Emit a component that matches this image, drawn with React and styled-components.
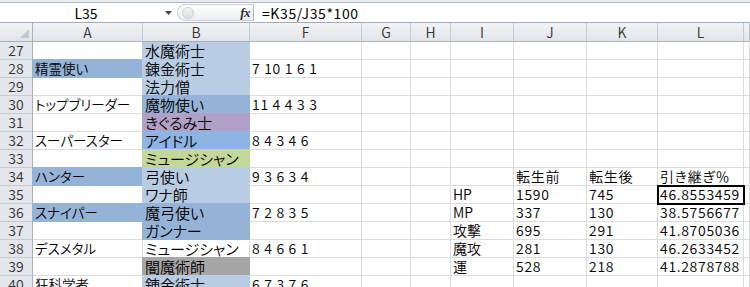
import React from "react";
import styled, { createGlobalStyle } from "styled-components";

const GlobalStyle = createGlobalStyle`
  html, body {
    margin: 0;
    padding: 0;
    background: #ffffff;
    overflow: hidden;
  }
  body {
    font-family: "Noto Sans CJK JP", "Noto Sans", sans-serif;
    color: #000;
  }
`;

const GRID = "33px 110px 107px 112px 49px 40px 63px 73px 71px 86px 1fr";

const Sheet = styled.div`
  width: 750px;
  height: 287px;
  overflow: hidden;
`;

const FormulaBar = styled.div`
  height: 22px;
  box-sizing: border-box;
  padding-top: 2px;
  background: #e9ecf0;
`;

const BarInner = styled.div`
  display: flex;
  align-items: center;
  height: 20px;
  box-sizing: border-box;
  border-top: 1px solid #b4bbc4;
  background: #fff;
`;

const NameBox = styled.div`
  width: 160px;
  box-sizing: border-box;
  padding-left: 12px;
  text-align: center;
  font-size: 14px;
  line-height: 18px;
`;

const ArrowBox = styled.div`
  width: 17px;
  display: flex;
  justify-content: center;
  align-items: center;
`;

const Pill = styled.div`
  width: 77px;
  height: 17px;
  box-sizing: border-box;
  display: flex;
  align-items: center;
  justify-content: space-between;
  padding: 0 3px 0 4px;
  border: 1px solid #c9cdd3;
  border-right: 1px solid #a9b0b9;
  border-radius: 9px 0 0 9px;
  background: linear-gradient(#fdfdfe, #eceff2);
`;

const Knob = styled.div`
  width: 10px;
  height: 10px;
  border-radius: 50%;
  border: 1px solid #cdd1d6;
  background: linear-gradient(#f4f5f7, #dcdfe3);
`;

const Fx = styled.span`
  font-family: "Liberation Serif", "DejaVu Serif", serif;
  font-style: italic;
  font-weight: bold;
  font-size: 13px;
  color: #2b2b2b;
  letter-spacing: -0.5px;
`;

const FormulaText = styled.div`
  padding-left: 8px;
  font-size: 14px;
  line-height: 18px;
  letter-spacing: 0.6px;
`;

const Row = styled.div`
  display: grid;
  grid-template-columns: ${GRID};
  height: 18px;
`;

const HeadRow = styled(Row)`
  border-top: 1px solid #a3abb5;
  height: 20px;
  box-sizing: border-box;
`;

const ColHead = styled.div`
  box-sizing: border-box;
  background: linear-gradient(#f1f3f5, #e1e5ea);
  border-right: 1px solid #c6cbd2;
  border-bottom: 1px solid #a8b0ba;
  text-align: center;
  font-size: 14px;
  line-height: 18px;
  font-weight: 350;
  color: #333;
`;

const Corner = styled(ColHead)`
  display: flex;
  align-items: flex-end;
  justify-content: flex-end;
  padding: 0 3px 3px 0;
  border-right: 1px solid #a8b0ba;
`;

const RowHead = styled.div`
  box-sizing: border-box;
  background: #e3e7ec;
  border-right: 1px solid #a8b0ba;
  border-bottom: 1px solid #c6cbd2;
  text-align: center;
  font-size: 14px;
  line-height: 17px;
  font-weight: 350;
  color: #333;
`;

const Cell = styled.div`
  box-sizing: border-box;
  position: relative;
  background: ${(p) => p.$bg || "transparent"};
  border-right: 1px solid ${(p) => p.$bg || "#dadcdd"};
  border-bottom: 1px solid ${(p) => p.$bg || "#dadcdd"};
  box-shadow: ${(p) =>
    p.$bg
      ? `-1px 0 0 ${p.$bg}${p.$top ? "" : `, 0 -1px 0 ${p.$bg}, -1px -1px 0 ${p.$bg}`}`
      : "none"};
  padding-left: 2px;
  font-size: ${(p) => p.$size || 14}px;
  font-weight: 350;
  line-height: 17px;
  white-space: nowrap;
  font-feature-settings: "palt";
  letter-spacing: ${(p) => (p.$num ? "0.7px" : "0")};
  outline: ${(p) => (p.$active ? "2px solid #000" : "none")};
  outline-offset: -1px;
  z-index: ${(p) => (p.$active ? 2 : "auto")};
`;

const light = "#b8cce4";
const mid = "#95b3d7";
const purple = "#b1a0c7";
const sky = "#8db4e2";
const green = "#c4d79b";
const gray = "#a6a6a6";

const rows = [
  { n: 27, b: "水魔術士", bBg: light },
  { n: 28, a: "精霊使い", aBg: mid, b: "錬金術士", bBg: light, f: "7 10 1 6 1" },
  { n: 29, b: "法力僧", bBg: light },
  { n: 30, a: "トップブリーダー", b: "魔物使い", bBg: mid, f: "11 4 4 3 3" },
  { n: 31, b: "きぐるみ士", bBg: purple },
  { n: 32, a: "スーパースター", b: "アイドル", bBg: sky, f: "8 4 3 4 6" },
  { n: 33, b: "ミュージシャン", bBg: green },
  { n: 34, a: "ハンター", aBg: mid, b: "弓使い", bBg: light, f: "9 3 6 3 4", j: "転生前", k: "転生後", l: "引き継ぎ％" },
  { n: 35, b: "ワナ師", bBg: light, i: "HP", j: "1590", k: "745", l: "46.8553459", active: true },
  { n: 36, a: "スナイパー", aBg: mid, b: "魔弓使い", bBg: mid, f: "7 2 8 3 5", i: "MP", j: "337", k: "130", l: "38.5756677" },
  { n: 37, b: "ガンナー", bBg: mid, i: "攻撃", j: "695", k: "291", l: "41.8705036" },
  { n: 38, a: "デスメタル", b: "ミュージシャン", f: "8 4 6 6 1", i: "魔攻", j: "281", k: "130", l: "46.2633452" },
  { n: 39, b: "闇魔術師", bBg: gray, i: "運", j: "528", k: "218", l: "41.2878788" },
  { n: 40, a: "狂科学者", b: "錬金術士", bBg: light, f: "6 7 3 7 6" },
];

const columns = ["A", "B", "F", "G", "H", "I", "J", "K", "L", ""];

const App = () => {
  return (
    <>
      <GlobalStyle />
      <Sheet>
        <FormulaBar>
          <BarInner>
            <NameBox>L35</NameBox>
            <ArrowBox>
              <svg width="7" height="4" viewBox="0 0 7 4">
                <path d="M0 0 H7 L3.5 4 Z" fill="#444" />
              </svg>
            </ArrowBox>
            <Pill>
              <Knob />
              <Fx>fx</Fx>
            </Pill>
            <FormulaText>=K35/J35*100</FormulaText>
          </BarInner>
        </FormulaBar>

        <HeadRow>
          <Corner>
            <svg width="9" height="9" viewBox="0 0 9 9">
              <path d="M9 0 V9 H0 Z" fill="#c3c8cf" />
            </svg>
          </Corner>
          {columns.map((c, idx) => (
            <ColHead key={idx}>{c}</ColHead>
          ))}
        </HeadRow>

        {rows.map((r, idx) => {
          const top = idx === 0;
          return (
            <Row key={r.n}>
              <RowHead>{r.n}</RowHead>
              <Cell $bg={r.aBg} $top={top} $size={13.5}>{r.a}</Cell>
              <Cell $bg={r.bBg} $top={top} $size={15}>{r.b}</Cell>
              <Cell $num>{r.f}</Cell>
              <Cell />
              <Cell />
              <Cell>{r.i}</Cell>
              <Cell $num>{r.j}</Cell>
              <Cell $num>{r.k}</Cell>
              <Cell $num $active={r.active}>{r.l}</Cell>
              <Cell />
            </Row>
          );
        })}
      </Sheet>
    </>
  );
};

export default App;
